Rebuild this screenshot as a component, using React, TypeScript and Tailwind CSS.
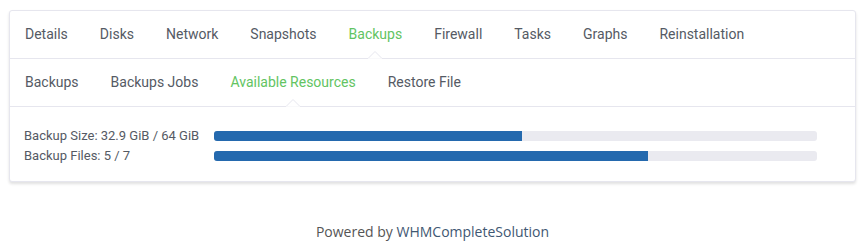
const mainTabs = ['Details', 'Disks', 'Network', 'Snapshots', 'Backups', 'Firewall', 'Tasks', 'Graphs', 'Reinstallation']
const subTabs = ['Backups', 'Backups Jobs', 'Available Resources', 'Restore File']

function TabRow({ items, active }: { items: string[]; active: string }) {
  return (
    <div className="flex h-[48px] items-center border-b border-[#e6e6ee] pl-0">
      {items.map((t, i) => (
        <div
          key={t}
          className={`relative flex h-full items-center px-4 text-[14px] ${i === 0 ? '-ml-[1px]' : ''} ${t === active ? 'text-[#62c462]' : 'text-[#555a64]'}`}
        >
          {t}
          {t === active && (
            <svg className="absolute bottom-[-1px] left-1/2 -ml-[7px]" width="14" height="8" viewBox="0 0 14 8">
              <path d="M0 7.5 L7 0.5 L14 7.5" fill="#fff" stroke="#e6e6ee" strokeWidth="1" />
              <rect x="0" y="7.5" width="14" height="1" fill="#fff" />
            </svg>
          )}
        </div>
      ))}
    </div>
  )
}

function Bar({ label, pct }: { label: string; pct: number }) {
  return (
    <div className="flex h-[20px] items-center">
      <div className="w-[190px] text-[13px] text-[#555a64]">{label}</div>
      <div className="h-[10px] w-[603px] overflow-hidden rounded-[3px] bg-[#eaeaf0]">
        <div className="h-full bg-[#2469ae]" style={{ width: `${pct}%` }} />
      </div>
    </div>
  )
}

export default function App() {
  return (
    <div className="min-h-[246px] bg-white pt-[10px]" style={{ fontFamily: 'Roboto, "Noto Sans", sans-serif' }}>
      <div className="mx-[9px] w-[847px] rounded-[3px] border border-[#e6e6ee] bg-white shadow-[0_2px_3px_rgba(0,0,0,0.12)]">
        <TabRow items={mainTabs} active="Backups" />
        <TabRow items={subTabs} active="Available Resources" />
        <div className="px-[14px] pb-[15px] pt-[19px]">
          <Bar label="Backup Size: 32.9 GiB / 64 GiB" pct={51} />
          <Bar label="Backup Files: 5 / 7" pct={72} />
        </div>
      </div>
      <div
        className="pt-[40px] text-center text-[14px] leading-[20px] text-[#555]"
        style={{ fontFamily: '"Open Sans", sans-serif' }}
      >
        Powered by <span className="text-[#3f5873]">WHMCompleteSolution</span>
      </div>
    </div>
  )
}
